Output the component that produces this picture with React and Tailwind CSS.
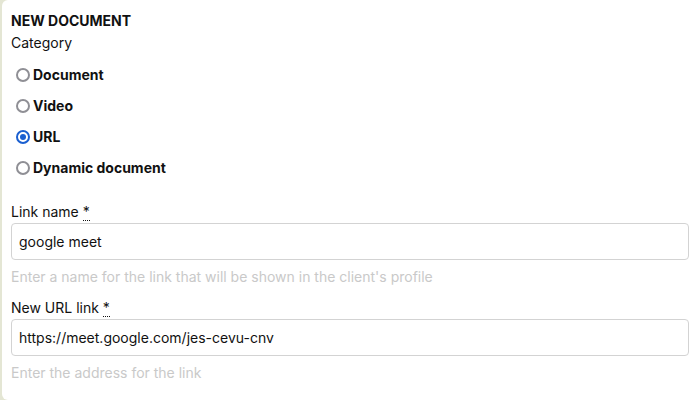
import { useState } from "react";

const categories = ["Document", "Video", "URL", "Dynamic document"];

function Field({ label, value, help }) {
  return (
    <div className="flex flex-col">
      <label className="text-[14px] leading-[20px] text-[#111]">
        {label}{" "}
        <abbr title="required" className="no-underline border-b border-dotted border-[#111]">*</abbr>
      </label>
      <input
        type="text"
        defaultValue={value}
        className="mt-[1px] h-[37px] w-full rounded-[4px] border border-[#d3d3d3] px-[7px] text-[14px] text-[#111] outline-none"
      />
      <p className="mt-[7px] text-[14px] leading-[20px] text-[#c9c9c9]">{help}</p>
    </div>
  );
}

function Radio({ checked }) {
  return (
    <span
      className={
        checked
          ? "flex h-[14px] w-[14px] items-center justify-center rounded-full border-2 border-[#1a5fd0]"
          : "h-[14px] w-[14px] rounded-full border-2 border-[#8f8f95]"
      }
    >
      {checked && <span className="h-[6px] w-[6px] rounded-full bg-[#1a5fd0]" />}
    </span>
  );
}

export default function App() {
  const [category, setCategory] = useState("URL");

  return (
    <div className="h-[400px] w-[698px] overflow-hidden bg-[#e4e6d4] pl-[2px]" style={{ fontFamily: "Inter, 'Liberation Sans', sans-serif" }}>
      <div className="h-full w-[720px] rounded-[6px] bg-white pl-[9px] pr-[33px] pt-[11px]">
        <h2 className="text-[14px] font-bold leading-[20px] text-[#111]">NEW DOCUMENT</h2>
        <p className="mt-[2px] text-[14px] leading-[20px] text-[#111]">Category</p>

        <div className="mt-[6px] flex flex-col">
          {categories.map((c) => (
            <label
              key={c}
              onClick={() => setCategory(c)}
              className="flex h-[31px] cursor-pointer items-center gap-[3px] pl-[5px] text-[14px] font-bold text-[#111]"
            >
              <Radio checked={category === c} />
              {c}
            </label>
          ))}
        </div>

        <div className="mt-[19px] flex flex-col gap-[11px]">
          <Field
            label="Link name"
            value="google meet"
            help="Enter a name for the link that will be shown in the client's profile"
          />
          <Field
            label="New URL link"
            value="https://meet.google.com/jes-cevu-cnv"
            help="Enter the address for the link"
          />
        </div>
      </div>
    </div>
  );
}
